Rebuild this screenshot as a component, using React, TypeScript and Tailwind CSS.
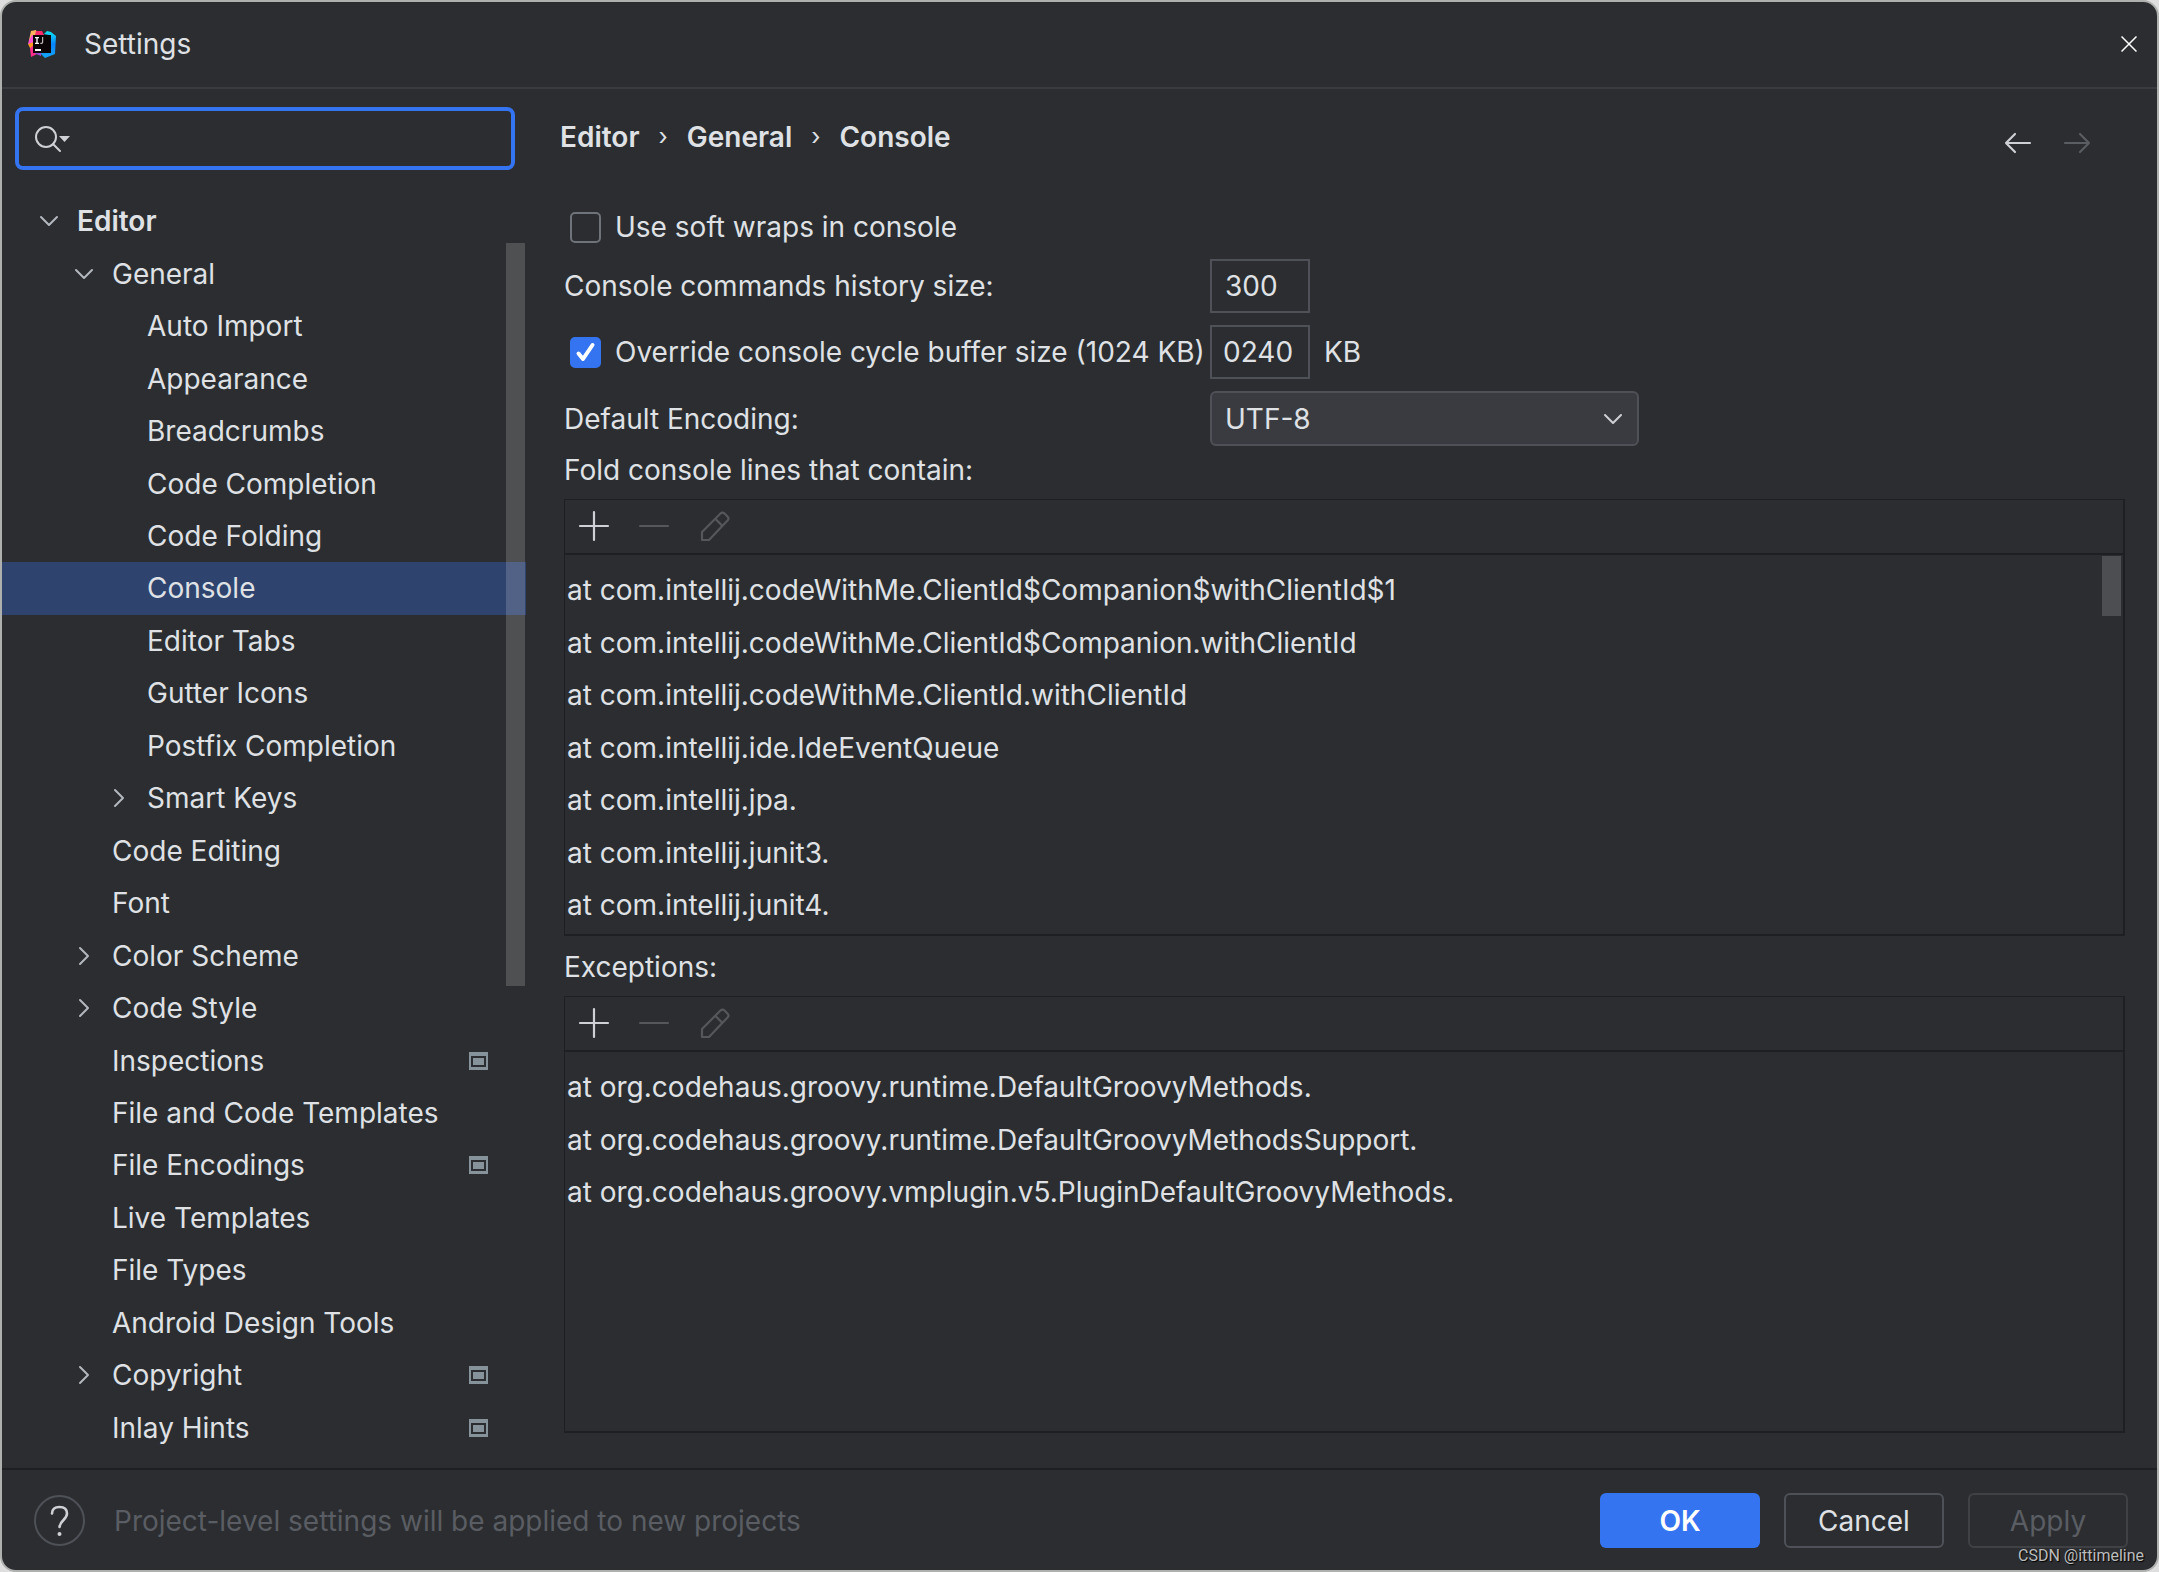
import { useState } from 'react';

type TreeRow = {
  label: string;
  level: number;
  arrow?: 'open' | 'closed';
  project?: boolean;
};

const treeRows: TreeRow[] = [
  { label: 'Editor', level: 0, arrow: 'open' },
  { label: 'General', level: 1, arrow: 'open' },
  { label: 'Auto Import', level: 2 },
  { label: 'Appearance', level: 2 },
  { label: 'Breadcrumbs', level: 2 },
  { label: 'Code Completion', level: 2 },
  { label: 'Code Folding', level: 2 },
  { label: 'Console', level: 2 },
  { label: 'Editor Tabs', level: 2 },
  { label: 'Gutter Icons', level: 2 },
  { label: 'Postfix Completion', level: 2 },
  { label: 'Smart Keys', level: 2, arrow: 'closed' },
  { label: 'Code Editing', level: 1 },
  { label: 'Font', level: 1 },
  { label: 'Color Scheme', level: 1, arrow: 'closed' },
  { label: 'Code Style', level: 1, arrow: 'closed' },
  { label: 'Inspections', level: 1, project: true },
  { label: 'File and Code Templates', level: 1 },
  { label: 'File Encodings', level: 1, project: true },
  { label: 'Live Templates', level: 1 },
  { label: 'File Types', level: 1 },
  { label: 'Android Design Tools', level: 1 },
  { label: 'Copyright', level: 1, arrow: 'closed', project: true },
  { label: 'Inlay Hints', level: 1, project: true },
];

const foldLines = [
  'at com.intellij.codeWithMe.ClientId$Companion$withClientId$1',
  'at com.intellij.codeWithMe.ClientId$Companion.withClientId',
  'at com.intellij.codeWithMe.ClientId.withClientId',
  'at com.intellij.ide.IdeEventQueue',
  'at com.intellij.jpa.',
  'at com.intellij.junit3.',
  'at com.intellij.junit4.',
];

const exceptionLines = [
  'at org.codehaus.groovy.runtime.DefaultGroovyMethods.',
  'at org.codehaus.groovy.runtime.DefaultGroovyMethodsSupport.',
  'at org.codehaus.groovy.vmplugin.v5.PluginDefaultGroovyMethods.',
];

const levelPadding = ['pl-[37px]', 'pl-[72px]', 'pl-[107px]'];

function IdeaLogo() {
  return (
    <svg className="h-7 w-7 shrink-0" viewBox="0 0 28 28" aria-hidden="true">
      <defs>
        <linearGradient id="idea-right" x1="0" y1="0" x2="0" y2="1">
          <stop offset="0" stopColor="#0fe3f5" />
          <stop offset="0.5" stopColor="#0a84fc" />
          <stop offset="1" stopColor="#14a6f7" />
        </linearGradient>
      </defs>
      <path d="M3 1 8 0l2 5-5 6-4-1z" fill="#fcb25c" />
      <path d="M1 10 4 5l2 1v8H0z" fill="#f94fd0" />
      <path d="m0 14 6-2v6l-4 0z" fill="#ff9a1f" />
      <path d="m2 18 4-3v8h5l-8 4z" fill="#fe2d8c" />
      <path d="M8 1h6l2 4H7z" fill="#fb2a6a" />
      <path d="m16 4 3-3 4 1 5 4-1 18-10 4-5-5 9-2V5z" fill="url(#idea-right)" />
      <path d="m6 23 7-1v4z" fill="#9c4bd8" />
      <rect x="5" y="5" width="18" height="18" fill="#0a0406" />
      <path d="M7 7h4v1.300h-1.300v4.400H11V14H7v-1.300h1.300V8.300H7z" fill="#fff" />
      <path d="M14.600 7v5.200q0 1.300-2.300 1.200" stroke="#b9b5b6" strokeWidth="1.200" fill="none" />
      <path d="M7 19h6v2H7z" fill="#fff" />
    </svg>
  );
}

function TreeArrow({ direction }: { direction: 'open' | 'closed' }) {
  return (
    <svg className="h-5 w-5" viewBox="0 0 20 20" fill="none" stroke="#b4b8bf" strokeWidth="2" strokeLinecap="round" strokeLinejoin="round" aria-hidden="true">
      {direction === 'open' ? <path d="m2 6 8 8 8-8" /> : <path d="m6 2 8 8-8 8" />}
    </svg>
  );
}

function ProjectBadge() {
  return (
    <svg className="h-[18px] w-5" viewBox="0 0 20 18" aria-hidden="true">
      <path d="M0 0h19v18H0z" fill="#87939a" />
      <path d="M2 4h15v11H2z" fill="#2b2d30" />
      <path d="M4 6h11v7H4z" fill="#87939a" />
    </svg>
  );
}

function ListPanel({ name, lines, scrollbar }: { name: string; lines: string[]; scrollbar?: boolean }) {
  return (
    <section aria-label={name} className="flex min-h-0 flex-1 flex-col border-t border-r-2 border-b-2 border-l border-[#1e1f22]">
      <div className="flex h-[55px] shrink-0 items-center gap-7 border-b-2 border-[#1e1f22] pb-[2px] pl-[13px]">
        <button type="button" aria-label="Add" className="text-[#ced0d6]">
          <svg className="h-8 w-8" viewBox="0 0 32 32" fill="none" stroke="currentColor" strokeWidth="2.200" strokeLinecap="round">
            <path d="M16 2v28M2 16h28" />
          </svg>
        </button>
        <button type="button" aria-label="Remove" disabled className="text-[#55575a]">
          <svg className="h-8 w-8" viewBox="0 0 32 32" fill="none" stroke="currentColor" strokeWidth="2.200" strokeLinecap="round">
            <path d="M2 16h28" />
          </svg>
        </button>
        <button type="button" aria-label="Edit" disabled className="text-[#55575a]">
          <svg className="h-8 w-8" viewBox="0 0 32 32" fill="none" stroke="currentColor" strokeWidth="2.200" strokeLinejoin="round">
            <path d="M4 30v-8L22.500 3.500q2-2 4 0l3 3q2 2 0 4L11 30zM17.500 9l7 7" />
          </svg>
        </button>
      </div>
      <div className="relative flex-1 overflow-hidden pt-[9px]">
        <ul>
          {lines.map((line, index) => (
            <li key={line} className={index % 2 ? 'h-[52px] pl-[2px] leading-[52px]' : 'h-[53px] pl-[2px] leading-[52px]'}>
              {line}
            </li>
          ))}
        </ul>
        {scrollbar && <div className="absolute top-px right-[2px] h-[60px] w-[19px] bg-[#4d4e51]" />}
      </div>
    </section>
  );
}

export default function App() {
  const [selected, setSelected] = useState('Console');
  const [softWraps, setSoftWraps] = useState(false);
  const [override, setOverride] = useState(true);

  return (
    <div className="h-screen min-h-[1200px] bg-[#dedede] font-['Inter',sans-serif] text-[28px] leading-9 text-[#dfe1e5]">
      <div className="relative flex h-full flex-col overflow-hidden rounded-[16px] border-2 border-[#aeb0ae] bg-[#2b2d30]">
        <header className="flex h-[87px] shrink-0 items-center border-b-2 border-[#393b40] pr-5 pb-[2px] pl-[26px]">
          <IdeaLogo />
          <h1 className="ml-7 flex-1">Settings</h1>
          <button type="button" aria-label="Close">
            <svg className="h-4 w-4" viewBox="0 0 16 16" stroke="#fff" strokeWidth="1.500">
              <path d="m.5.5 15 15m0-15-15 15" />
            </svg>
          </button>
        </header>

        <div className="flex min-h-0 flex-1">
          <aside className="flex w-[524px] shrink-0 flex-col pb-[14px]">
            <div className="mt-[18px] mr-[11px] ml-[13px] flex h-[63px] shrink-0 items-center rounded-lg border-4 border-[#3574f0] pl-4">
              <svg className="h-7 w-9 shrink-0" viewBox="0 0 36 28" fill="none" aria-hidden="true">
                <circle cx="11" cy="12" r="10" stroke="#ced0d6" strokeWidth="2" />
                <path d="m18 19 7 7" stroke="#ced0d6" strokeWidth="2" strokeLinecap="round" />
                <path d="M24 11h11l-5.500 6z" fill="#ced0d6" />
              </svg>
              <input type="search" aria-label="Search settings" className="min-w-0 flex-1 bg-transparent px-2 outline-none" />
            </div>

            <nav aria-label="Settings categories" className="relative mt-[25px] min-h-0 flex-1">
              <ul className="grid h-full auto-rows-fr">
                {treeRows.map((row) => (
                  <li key={row.label}>
                    <button
                      type="button"
                      onClick={() => setSelected(row.label)}
                      className={`flex h-full w-full items-center text-left ${levelPadding[row.level]} ${row.level === 0 ? 'font-semibold' : ''} ${selected === row.label ? 'bg-[#2e436e]' : ''}`}
                    >
                      <span className="w-[38px] shrink-0">{row.arrow && <TreeArrow direction={row.arrow} />}</span>
                      <span className="flex-1">{row.label}</span>
                      {row.project && (
                        <span className="mr-[37px]">
                          <ProjectBadge />
                        </span>
                      )}
                    </button>
                  </li>
                ))}
              </ul>
              <div className="absolute top-12 right-px h-[59%] w-[19px] bg-white/17" />
            </nav>
          </aside>

          <main className="flex min-w-0 flex-1 flex-col pr-8 pb-[35px] pl-[34px]">
            <div className="flex h-24 shrink-0 items-center justify-between pr-[34px]">
              <nav aria-label="Breadcrumb" className="flex items-center gap-[19px] font-semibold">
                <a href="#editor">Editor</a>
                <span className="text-2xl font-normal">›</span>
                <a href="#general">General</a>
                <span className="text-2xl font-normal">›</span>
                <a href="#console">Console</a>
              </nav>
              <div className="flex gap-[31px] pt-3">
                <button type="button" aria-label="Back" className="text-[#ced0d6]">
                  <svg className="h-7 w-7" viewBox="0 0 28 28" fill="none" stroke="currentColor" strokeWidth="2.200" strokeLinecap="round" strokeLinejoin="round">
                    <path d="M26 14H2M11 5l-9 9 9 9" />
                  </svg>
                </button>
                <button type="button" aria-label="Forward" disabled className="text-[#5a5d61]">
                  <svg className="h-7 w-7" viewBox="0 0 28 28" fill="none" stroke="currentColor" strokeWidth="2.200" strokeLinecap="round" strokeLinejoin="round">
                    <path d="M2 14h24M17 5l9 9-9 9" />
                  </svg>
                </button>
              </div>
            </div>

            <div className="flex min-h-0 flex-1 flex-col pl-1">
              <div className="grid shrink-0 grid-cols-[646px_1fr] items-center gap-y-3 pt-[22px]">
                <label className="col-span-2 flex h-10 items-center pl-[6px]">
                  <input
                    type="checkbox"
                    checked={softWraps}
                    onChange={(event) => setSoftWraps(event.target.checked)}
                    className="mr-[14px] h-[31px] w-[31px] appearance-none rounded-[5px] border-2 border-[#6f737a] checked:border-[#3574f0] checked:bg-[#3574f0]"
                  />
                  Use soft wraps in console
                </label>

                <label htmlFor="history-size">Console commands history size:</label>
                <input id="history-size" type="text" defaultValue="300" className="h-[54px] w-[100px] border-2 border-[#4e5157] bg-transparent px-[13px] outline-none" />

                <label className="flex items-center pl-[6px] whitespace-nowrap">
                  <span className="relative mr-[14px] h-[31px] w-[31px]">
                    <input
                      type="checkbox"
                      checked={override}
                      onChange={(event) => setOverride(event.target.checked)}
                      className="peer block h-[31px] w-[31px] appearance-none rounded-[5px] border-2 border-[#6f737a] checked:border-[#3574f0] checked:bg-[#3574f0]"
                    />
                    <svg className="pointer-events-none absolute inset-0 hidden h-[31px] w-[31px] peer-checked:block" viewBox="0 0 31 31" fill="none" stroke="#fff" strokeWidth="4" strokeLinecap="round" strokeLinejoin="round" aria-hidden="true">
                      <path d="m8.500 16.500 4.500 5.500L22.500 8" />
                    </svg>
                  </span>
                  Override console cycle buffer size (1024 KB)
                </label>
                <div className="flex items-center gap-[14px]">
                  <input type="text" aria-label="Buffer size in KB" defaultValue="0240" className="h-[54px] w-[100px] border-2 border-[#4e5157] bg-transparent px-[11px] outline-none" />
                  <span>KB</span>
                </div>

                <label htmlFor="encoding">Default Encoding:</label>
                <div className="relative w-[429px]">
                  <select id="encoding" className="h-[55px] w-full appearance-none rounded-md border-2 border-[#4e5157] bg-[#393b40] px-[13px] outline-none">
                    <option>UTF-8</option>
                  </select>
                  <svg className="pointer-events-none absolute top-[18px] right-4 h-5 w-5" viewBox="0 0 20 20" fill="none" stroke="#ced0d6" strokeWidth="2" strokeLinecap="round" strokeLinejoin="round" aria-hidden="true">
                    <path d="m2 6 8 8 8-8" />
                  </svg>
                </div>
              </div>

              <h2 className="h-[53px] shrink-0 pt-[6px]">Fold console lines that contain:</h2>
              <ListPanel name="Fold console lines that contain" lines={foldLines} scrollbar />
              <h2 className="h-[60px] shrink-0 pt-[13px]">Exceptions:</h2>
              <ListPanel name="Exceptions" lines={exceptionLines} />
            </div>
          </main>
        </div>

        <footer className="flex h-[102px] shrink-0 items-center border-t-2 border-[#1e1f22] pt-px pr-[29px] pl-8">
          <button type="button" aria-label="Help" className="grid h-[51px] w-[51px] place-items-center rounded-full border-2 border-[#4e5157]">
            <svg className="h-8 w-5" viewBox="0 0 20 32" fill="none" aria-hidden="true">
              <path d="M2 8.500Q2 2 9.500 2T17 8.500q0 3-3.500 6.500T9.500 22" stroke="#ced0d6" strokeWidth="2.600" strokeLinecap="round" />
              <circle cx="9.500" cy="29" r="2" fill="#ced0d6" />
            </svg>
          </button>
          <p className="ml-[29px] flex-1 text-[#5a5d63]">Project-level settings will be applied to new projects</p>
          <div className="flex gap-6">
            <button type="button" className="h-[55px] w-40 rounded-md bg-[#3574f0] font-semibold text-white">
              OK
            </button>
            <button type="button" className="h-[55px] w-40 rounded-md border-2 border-[#4e5157]">
              Cancel
            </button>
            <button type="button" disabled className="h-[55px] w-40 rounded-md border-2 border-[#3f4145] text-[#5a5d63]">
              Apply
            </button>
          </div>
        </footer>

        <span className="absolute right-[13px] bottom-1 font-['Roboto',sans-serif] text-base leading-5 text-[#bcbdbe] [text-shadow:1px_1px_1px_#000]">CSDN @ittimeline</span>
      </div>
    </div>
  );
}
